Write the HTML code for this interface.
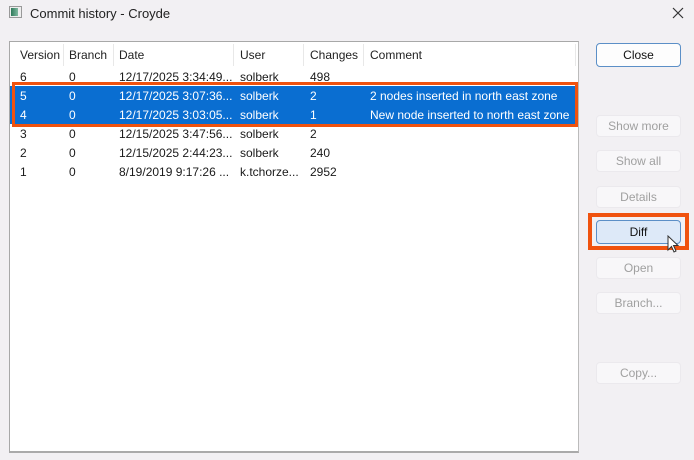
<!DOCTYPE html>
<html><head><style>
*{margin:0;padding:0;box-sizing:border-box}
body{width:694px;height:460px;background:#f2f0f3;font-family:"Liberation Sans",sans-serif;font-size:12px;color:#1a1a1a;position:relative;overflow:hidden}
.a{position:absolute}
.title{left:30px;top:6px;font-size:13px;color:#222}
.list{left:9px;top:41px;width:570px;height:412px;background:#fff;border:1px solid #a8a8a8;border-right-color:#bbb;border-bottom:2px solid #aaa}
.hdr{left:0;top:0;width:566px;height:26px}
.hdr div{position:absolute;top:6px;color:#222}
.sep{position:absolute;top:2px;width:1px;height:22px;background:#e8e8e8}
.row{position:absolute;left:0;width:566px;height:19px}
.row span{position:absolute;top:3px}
.sel{background:#0a6ed1;color:#fff}
.btn{position:absolute;left:596px;width:85px;height:22px;background:#f8f7f9;border:1px solid #ebe9ed;border-radius:4px;color:#a0a0a0;text-align:center;line-height:20px;font-size:12px}
</style></head><body>
<div class="a" style="left:9px;top:6px;width:13px;height:12px;border:1px solid #999;background:#eee"><div style="position:absolute;left:1px;top:1px;width:7px;height:8px;background:linear-gradient(90deg,#2f7a5a,#7fb8a0)"></div></div>
<div class="a title">Commit history - Croyde</div>
<svg class="a" style="left:672px;top:7px" width="12" height="12" viewBox="0 0 12 12"><path d="M1 1L11 11M11 1L1 11" stroke="#333" stroke-width="1.2"/></svg>
<div class="a list">
 <div class="a hdr">
  <div style="left:10px">Version</div><div style="left:59px">Branch</div><div style="left:109px">Date</div><div style="left:230px">User</div><div style="left:300px">Changes</div><div style="left:360px">Comment</div>
  <span class="sep" style="left:53px"></span><span class="sep" style="left:103px"></span><span class="sep" style="left:223px"></span><span class="sep" style="left:293px"></span><span class="sep" style="left:353px"></span><span class="sep" style="left:565px"></span>
 </div>
 <div class="row" style="top:25px"><span style="left:10px">6</span><span style="left:59px">0</span><span style="left:109px">12/17/2025 3:34:49...</span><span style="left:230px">solberk</span><span style="left:300px">498</span></div>
 <div class="row sel" style="top:44px"><span style="left:10px">5</span><span style="left:59px">0</span><span style="left:109px">12/17/2025 3:07:36...</span><span style="left:230px">solberk</span><span style="left:300px">2</span><span style="left:360px">2 nodes inserted in north east zone</span></div>
 <div class="row sel" style="top:63px"><span style="left:10px">4</span><span style="left:59px">0</span><span style="left:109px">12/17/2025 3:03:05...</span><span style="left:230px">solberk</span><span style="left:300px">1</span><span style="left:360px">New node inserted to north east zone</span></div>
 <div class="row" style="top:82px"><span style="left:10px">3</span><span style="left:59px">0</span><span style="left:109px">12/15/2025 3:47:56...</span><span style="left:230px">solberk</span><span style="left:300px">2</span></div>
 <div class="row" style="top:101px"><span style="left:10px">2</span><span style="left:59px">0</span><span style="left:109px">12/15/2025 2:44:23...</span><span style="left:230px">solberk</span><span style="left:300px">240</span></div>
 <div class="row" style="top:120px"><span style="left:10px">1</span><span style="left:59px">0</span><span style="left:109px">8/19/2019 9:17:26 ...</span><span style="left:230px">k.tchorze...</span><span style="left:300px">2952</span></div>
</div>
<div class="a" style="left:12px;top:82px;width:566px;height:45px;border:3px solid #f0520e"></div>
<div class="btn" style="top:43px;height:24px;background:#fdfdfd;border:1px solid #5b8fc7;color:#111;line-height:22px">Close</div>
<div class="btn" style="top:115px">Show more</div>
<div class="btn" style="top:150px">Show all</div>
<div class="btn" style="top:186px">Details</div>
<div class="a" style="left:588px;top:213px;width:101px;height:37px;border:4px solid #f0520e"></div>
<div class="btn" style="top:220px;height:24px;background:#dde9f8;border:1px solid #5b8fc7;color:#111;line-height:22px">Diff</div>
<svg class="a" style="left:667px;top:235px" width="14" height="20" viewBox="0 0 14 20"><path d="M1 1 L1 15 L4.5 11.5 L7 17 L9 16 L6.5 10.5 L11 10.5 Z" fill="#fff" stroke="#333" stroke-width="1"/></svg>
<div class="btn" style="top:257px">Open</div>
<div class="btn" style="top:292px">Branch...</div>
<div class="btn" style="top:362px">Copy...</div>
</body></html>
